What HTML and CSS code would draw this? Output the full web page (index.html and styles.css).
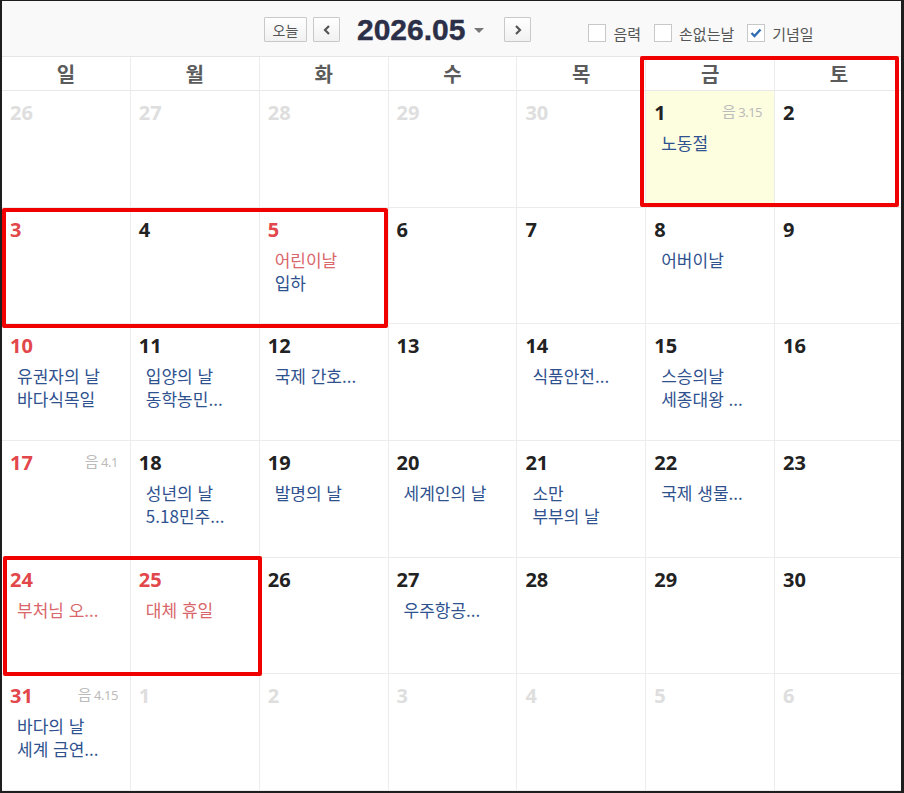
FILE: index.html
```html
<!DOCTYPE html>
<html lang="ko">
<head>
<meta charset="utf-8">
<link rel="stylesheet" href="styles.css">
</head>
<body>
<div class="frame">
  <div class="app">
    <div class="topbar">
      <div class="nav">
        <button class="btn today">오늘</button>
        <button class="btn arrow"><svg width="10" height="12" viewBox="0 0 10 12"><path d="M7 2 L3 6 L7 10" fill="none" stroke="#555" stroke-width="2.2"/></svg></button>
        <div class="title">2026.05<span class="caret"></span></div>
        <button class="btn arrow"><svg width="10" height="12" viewBox="0 0 10 12"><path d="M3 2 L7 6 L3 10" fill="none" stroke="#555" stroke-width="2.2"/></svg></button>
      </div>
      <div class="opts">
        <label class="opt"><span class="box"></span>음력</label>
        <label class="opt"><span class="box"></span>손없는날</label>
        <label class="opt"><span class="box"><svg width="12" height="10" viewBox="0 0 12 10"><path d="M1.5 5 L4.5 8 L10.5 1.5" fill="none" stroke="#2f6db5" stroke-width="2.4"/></svg></span>기념일</label>
      </div>
    </div>
    <div class="weekdays">
      <div class="wd">일</div><div class="wd">월</div><div class="wd">화</div><div class="wd">수</div><div class="wd">목</div><div class="wd">금</div><div class="wd">토</div>
    </div>
    <div class="grid">
      <div class="cell"><div class="num out">26</div></div>
      <div class="cell"><div class="num out">27</div></div>
      <div class="cell"><div class="num out">28</div></div>
      <div class="cell"><div class="num out">29</div></div>
      <div class="cell"><div class="num out">30</div></div>
      <div class="cell today-cell"><div class="head"><div class="num">1</div><div class="lunar"><span class="lk">음</span>3.15</div></div><div class="ev">노동절</div></div>
      <div class="cell"><div class="num">2</div></div>

      <div class="cell"><div class="num red">3</div></div>
      <div class="cell"><div class="num">4</div></div>
      <div class="cell"><div class="num red">5</div><div class="ev hol">어린이날</div><div class="ev">입하</div></div>
      <div class="cell"><div class="num">6</div></div>
      <div class="cell"><div class="num">7</div></div>
      <div class="cell"><div class="num">8</div><div class="ev">어버이날</div></div>
      <div class="cell"><div class="num">9</div></div>

      <div class="cell"><div class="num red">10</div><div class="ev">유권자의 날</div><div class="ev">바다식목일</div></div>
      <div class="cell"><div class="num">11</div><div class="ev">입양의 날</div><div class="ev">동학농민...</div></div>
      <div class="cell"><div class="num">12</div><div class="ev">국제 간호...</div></div>
      <div class="cell"><div class="num">13</div></div>
      <div class="cell"><div class="num">14</div><div class="ev">식품안전...</div></div>
      <div class="cell"><div class="num">15</div><div class="ev">스승의날</div><div class="ev">세종대왕 ...</div></div>
      <div class="cell"><div class="num">16</div></div>

      <div class="cell"><div class="head"><div class="num red">17</div><div class="lunar"><span class="lk">음</span>4.1</div></div></div>
      <div class="cell"><div class="num">18</div><div class="ev">성년의 날</div><div class="ev">5.18민주...</div></div>
      <div class="cell"><div class="num">19</div><div class="ev">발명의 날</div></div>
      <div class="cell"><div class="num">20</div><div class="ev">세계인의 날</div></div>
      <div class="cell"><div class="num">21</div><div class="ev">소만</div><div class="ev">부부의 날</div></div>
      <div class="cell"><div class="num">22</div><div class="ev">국제 생물...</div></div>
      <div class="cell"><div class="num">23</div></div>

      <div class="cell"><div class="num red">24</div><div class="ev hol">부처님 오...</div></div>
      <div class="cell"><div class="num red">25</div><div class="ev hol">대체 휴일</div></div>
      <div class="cell"><div class="num">26</div></div>
      <div class="cell"><div class="num">27</div><div class="ev">우주항공...</div></div>
      <div class="cell"><div class="num">28</div></div>
      <div class="cell"><div class="num">29</div></div>
      <div class="cell"><div class="num">30</div></div>

      <div class="cell"><div class="head"><div class="num red">31</div><div class="lunar"><span class="lk">음</span>4.15</div></div><div class="ev">바다의 날</div><div class="ev">세계 금연...</div></div>
      <div class="cell"><div class="num out">1</div></div>
      <div class="cell"><div class="num out">2</div></div>
      <div class="cell"><div class="num out">3</div></div>
      <div class="cell"><div class="num out">4</div></div>
      <div class="cell"><div class="num out">5</div></div>
      <div class="cell"><div class="num out">6</div></div>
    </div>
    <div class="mark mark1"></div>
    <div class="mark mark2"></div>
    <div class="mark mark3"></div>
  </div>
</div>
</body>
</html>
```
FILE: styles.css
```css
* { box-sizing: border-box; }
html, body { margin: 0; padding: 0; }
body {
  background: #1e1e1e;
  width: 904px;
  height: 793px;
  overflow: hidden;
  font-family: "Noto Sans", "Noto Sans CJK KR", sans-serif;
}
.frame {
  padding: 1px 3px 2px 2px;
  width: 904px;
  height: 793px;
}
.app {
  position: relative;
  width: 899px;
  height: 790px;
  background: #fff;
  overflow: hidden;
}
.topbar {
  height: 56px;
  background: #f9f9f9;
  border-bottom: 1px solid #e6e6e6;
  display: flex;
  align-items: flex-start;
}
.nav {
  display: flex;
  align-items: center;
  margin-left: 262px;
  margin-top: 16px;
  height: 25px;
}
.btn {
  height: 25px;
  border: 1px solid #c9c9c9;
  background: linear-gradient(#ffffff, #f1f1f1);
  border-radius: 1px;
  padding: 0;
  display: flex;
  align-items: center;
  justify-content: center;
  font-family: "Noto Sans CJK KR", sans-serif;
  font-size: 14px;
  color: #555;
  line-height: 1;
}
.today { width: 43px; margin-right: 6px; }
.arrow { width: 27px; }
.title {
  font-family: "Liberation Sans", Arial, sans-serif;
  font-weight: bold;
  font-size: 30px;
  color: #2b2f47;
  margin-left: 17px;
  margin-right: 20px;
  display: flex;
  align-items: center;
  line-height: 1;
  -webkit-text-stroke: 0.4px #2b2f47;
}
.caret {
  display: inline-block;
  width: 0;
  height: 0;
  border-left: 5px solid transparent;
  border-right: 5px solid transparent;
  border-top: 5px solid #777;
  margin-left: 9px;
  margin-top: 2px;
}
.opts {
  display: flex;
  align-items: center;
  margin-left: 57px;
  margin-top: 22px;
  height: 20px;
}
.opt {
  display: flex;
  align-items: center;
  font-family: "Noto Sans CJK KR", sans-serif;
  font-size: 15px;
  color: #555;
  margin-right: 13px;
  line-height: 1;
}
.box {
  width: 18px;
  height: 18px;
  border: 1px solid #c8c8c8;
  background: #fff;
  margin-right: 7px;
  display: flex;
  align-items: center;
  justify-content: center;
}
.weekdays {
  display: grid;
  grid-template-columns: repeat(7, 128.857px);
  height: 34px;
  border-bottom: 1px solid #e8e8e8;
}
.wd {
  border-right: 1px solid #ececec;
  text-align: center;
  font-family: "Noto Sans CJK KR", sans-serif;
  font-weight: bold;
  font-size: 20px;
  line-height: 33px;
  color: #5b5b5b;
}
.grid {
  display: grid;
  grid-template-columns: repeat(7, 128.857px);
  grid-auto-rows: 116.667px;
}
.cell {
  border-right: 1px solid #ececec;
  border-bottom: 1px solid #ececec;
  padding: 8px 0 0 8px;
}
.today-cell { background: #fdfde0; }
.head {
  display: flex;
  justify-content: space-between;
  align-items: flex-start;
  padding-right: 12px;
  height: 27px;
}
.num {
  font-family: "Noto Sans", sans-serif;
  font-weight: bold;
  font-size: 20px;
  line-height: 27px;
  color: #222;
  height: 27px;
}
.num.red { color: #e2474b; }
.num.out { color: #dedede; }
.lunar {
  font-family: "Noto Sans", sans-serif;
  font-size: 13px;
  color: #bbbbbb;
  line-height: 27px;
  height: 27px;
  letter-spacing: -0.5px;
}
.lk {
  font-family: "Noto Sans CJK KR", sans-serif;
  font-size: 15px;
  line-height: 20px;
  margin-right: 3px;
}
.ev {
  font-family: "Noto Sans CJK KR", sans-serif;
  font-size: 17px;
  color: #2f528f;
  line-height: 23px;
  padding-left: 7px;
  white-space: nowrap;
}
.head + .ev, .num + .ev { margin-top: 5px; }
.ev.hol { color: #d9666a; }
.mark {
  position: absolute;
  border: 4px solid #f10000;
  border-radius: 2px;
}
.mark1 { left: 638px; top: 55px; width: 259px; height: 151px; }
.mark2 { left: 0px; top: 207px; width: 386px; height: 120px; }
.mark3 { left: 1px; top: 555px; width: 259px; height: 120px; }
```
